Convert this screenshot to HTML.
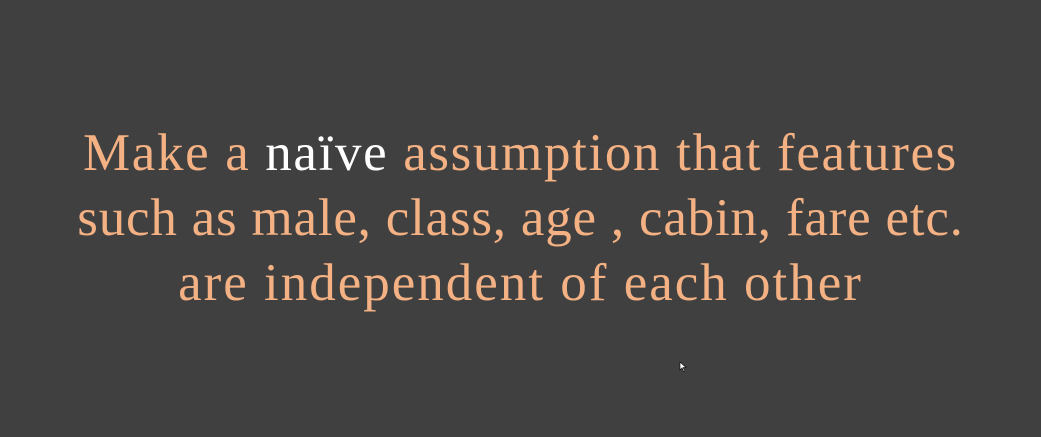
<!DOCTYPE html>
<html><head><meta charset="utf-8"><style>
html,body{margin:0;padding:0;background:#404040;width:1041px;height:437px;overflow:hidden}
.t{position:absolute;left:0;width:1041px;text-align:center;font-family:"Liberation Serif",serif;font-size:53px;letter-spacing:1.4px;color:#f4b183;white-space:nowrap;line-height:64px}
.w{color:#ffffff}
</style></head><body>
<div class="t" style="top:121px;letter-spacing:1.65px">Make a <span class="w">naïve</span> assumption that features</div>
<div class="t" style="top:186px;letter-spacing:0.8px">such as male, class, age , cabin, fare etc.</div>
<div class="t" style="top:251px;letter-spacing:2px">are independent of each other</div>
<svg style="position:absolute;left:679px;top:361px" width="8" height="12"><path d="M1 1 L1 9 L3 7 L5 11 L6 10 L4 6.5 L7 6.5 Z" fill="#fff" stroke="#000" stroke-width="0.6"/></svg>
</body></html>
